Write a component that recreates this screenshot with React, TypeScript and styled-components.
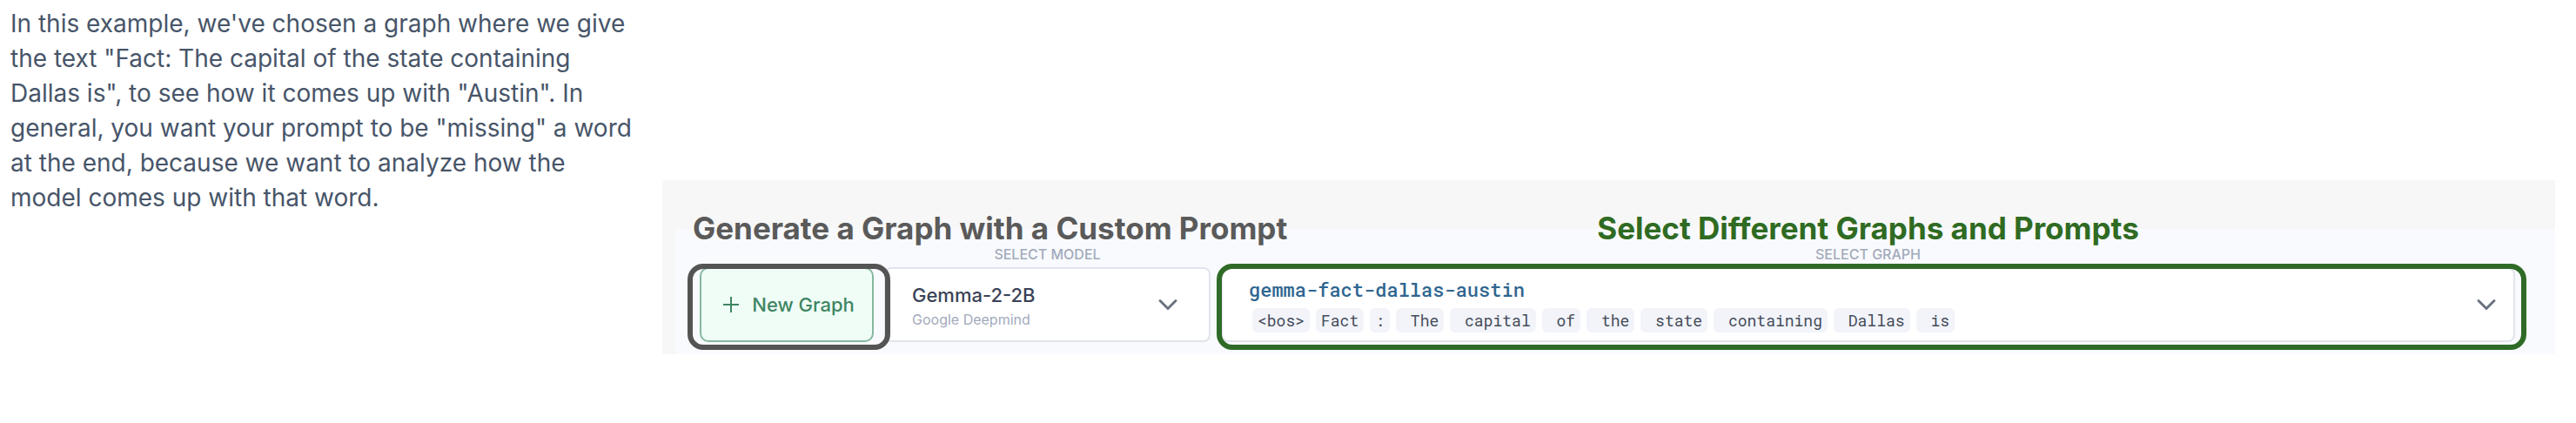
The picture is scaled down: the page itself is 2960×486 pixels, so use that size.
import React from "react";
import styled, { createGlobalStyle } from "styled-components";

const sans = `Inter, "Liberation Sans", sans-serif`;
const mono = `"Roboto Mono", "DejaVu Sans Mono", "Liberation Mono", monospace`;

const GlobalStyle = createGlobalStyle`
  *, *::before, *::after { box-sizing: border-box; }
  body { margin: 0; background: #ffffff; font-family: ${sans}; }
`;

const Page = styled.main`
  display: grid;
  grid-template-columns: minmax(0, 1fr) minmax(0, 3fr);
  column-gap: 24px;
  align-items: start;
  padding: 7px 24px 40px 12px;
`;

const Intro = styled.p`
  margin: 0;
  font-size: 28px;
  line-height: 40px;
  color: #475569;
`;

const Panel = styled.section`
  margin-top: 200px;
  padding: 35px 46px 14px 43px;
  background: linear-gradient(#f8fafd, #f8fafd) 15px 56px no-repeat, #f7f7f7;
`;

const Toolbar = styled.div`
  display: grid;
  grid-template-columns: 200px 375px minmax(0, 1fr);
  grid-template-rows: 40px 25px 86px;
  column-gap: 12px;
`;

const Heading = styled.h2<{ $color: string; $area: string; $align?: string }>`
  grid-area: ${(p) => p.$area};
  margin: 0;
  margin-left: ${(p) => (p.$align ? "0" : "-8px")};
  font-size: 35px;
  line-height: 40px;
  font-weight: 700;
  text-align: ${(p) => p.$align || "left"};
  white-space: nowrap;
  color: ${(p) => p.$color};
`;

const Label = styled.label<{ $column: number }>`
  grid-row: 2;
  grid-column: ${(p) => p.$column};
  text-align: center;
  font-size: 16px;
  line-height: 20px;
  font-weight: 500;
  color: #a3aabb;
`;

const Cell = styled.div<{ $column: number }>`
  grid-row: 3;
  grid-column: ${(p) => p.$column};
  position: relative;
  display: grid;
`;

const NewGraphButton = styled.button`
  display: flex;
  align-items: center;
  justify-content: center;
  gap: 14px;
  padding: 0 0 0 4px;
  border: 2px solid #86b8a0;
  border-radius: 10px;
  background: #effdf6;
  color: #3f8563;
  font: 500 22px/28px ${sans};
`;

const Highlight = styled.span<{ $color: string; $sides: string }>`
  position: absolute;
  z-index: 1;
  inset: ${(p) => p.$sides};
  border: 6px solid ${(p) => p.$color};
  border-radius: 18px;
  pointer-events: none;
`;

const Select = styled.select<{ $mono?: boolean }>`
  grid-area: 1 / 1;
  width: 100%;
  appearance: none;
  border: 2px solid #e1e4ec;
  border-radius: 8px;
  background: #ffffff;
  padding: ${(p) => (p.$mono ? "0 60px 34px 30px" : "0 60px 22px 30px")};
  font: ${(p) => (p.$mono ? `500 22px/28px ${mono}` : `500 22px/28px ${sans}`)};
  color: ${(p) => (p.$mono ? "#2f6690" : "#3a4256")};
`;

const Detail = styled.div`
  grid-area: 1 / 1;
  align-self: end;
  display: flex;
  pointer-events: none;
`;

const Maker = styled(Detail)`
  padding: 0 0 16px 32px;
  font-size: 16px;
  line-height: 20px;
  color: #a3aabb;
`;

const Tokens = styled(Detail)`
  gap: 7px;
  padding: 0 0 11px 36px;
`;

const Token = styled.span`
  padding: 0 6px;
  border-radius: 6px;
  background: #f2f4fa;
  font: 18px/28px ${mono};
  white-space: pre;
  color: #454b59;
`;

const Chevron = styled.svg<{ $inset: number }>`
  grid-area: 1 / 1;
  place-self: center end;
  margin-right: ${(p) => p.$inset}px;
  pointer-events: none;
`;

const tokens = ["<bos>", "Fact", ":", " The", " capital", " of", " the", " state", " containing", " Dallas", " is"];

function ChevronDown({ inset }: { inset: number }) {
  return (
    <Chevron
      $inset={inset}
      width="32"
      height="32"
      viewBox="0 0 32 32"
      fill="none"
      stroke="#6b7280"
      strokeWidth="3"
      strokeLinecap="round"
      aria-hidden="true"
    >
      <path d="M7 11.5L16 20.5L25 11.5" />
    </Chevron>
  );
}

export default function App() {
  return (
    <>
      <GlobalStyle />
      <Page>
        <Intro>
          In this example, we've chosen a graph where we give the text "Fact: The capital of the state containing
          Dallas is", to see how it comes up with "Austin". In general, you want your prompt to be "missing" a word at
          the end, because we want to analyze how the model comes up with that word.
        </Intro>
        <Panel>
          <Toolbar>
            <Heading $color="#5a5a5a" $area="1 / 1 / 2 / 3">Generate a Graph with a Custom Prompt</Heading>
            <Heading $color="#2f6b22" $area="1 / 3" $align="center">Select Different Graphs and Prompts</Heading>
            <Label $column={2} htmlFor="model">SELECT MODEL</Label>
            <Label $column={3} htmlFor="graph">SELECT GRAPH</Label>
            <Cell $column={1}>
              <NewGraphButton type="button">
                <svg width="20" height="20" viewBox="0 0 20 20" stroke="currentColor" strokeWidth="2" aria-hidden="true">
                  <path d="M10 1V19M1 10H19" />
                </svg>
                New Graph
              </NewGraphButton>
              <Highlight $color="#545454" $sides="-4px -19px -9px -14px" />
            </Cell>
            <Cell $column={2}>
              <Select id="model">
                <option>Gemma-2-2B</option>
              </Select>
              <Maker>Google Deepmind</Maker>
              <ChevronDown inset={33} />
            </Cell>
            <Cell $column={3}>
              <Select id="graph" $mono>
                <option>gemma-fact-dallas-austin</option>
              </Select>
              <Tokens>
                {tokens.map((token) => (
                  <Token key={token}>{token}</Token>
                ))}
              </Tokens>
              <ChevronDown inset={17} />
              <Highlight $color="#2f6b27" $sides="-4px -13px -9px -5px" />
            </Cell>
          </Toolbar>
        </Panel>
      </Page>
    </>
  );
}
